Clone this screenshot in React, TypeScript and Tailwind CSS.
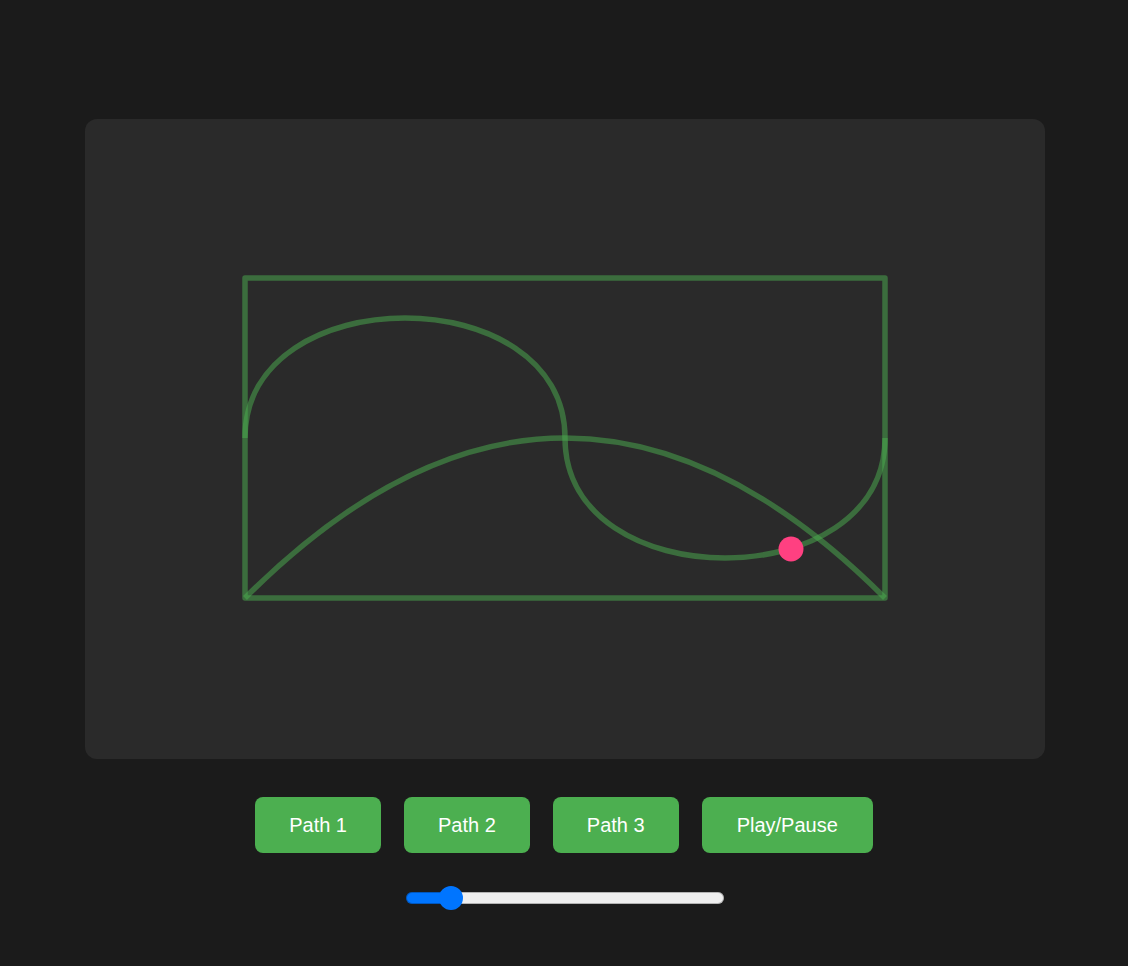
import React, { useEffect, useRef, useState } from "react";

// Path shapes in a 640x320 box, drawn at an offset inside the stage
const PATHS = [
  "M0,160 C0,0 320,0 320,160 S640,320 640,160",
  "M0,320 Q320,0 640,320",
  "M0,0 L640,0 L640,320 L0,320 Z",
];

function pointOnPath(el: SVGPathElement | null, t: number) {
  if (!el) return { x: 546, y: 271 };
  const len = el.getTotalLength();
  const p = el.getPointAtLength(len * t);
  return { x: p.x, y: p.y };
}

export default function App() {
  const [active, setActive] = useState(0);
  const [playing, setPlaying] = useState(false);
  const [speed, setSpeed] = useState(2);
  const [progress, setProgress] = useState(0.645);
  const pathRefs = useRef<(SVGPathElement | null)[]>([]);

  useEffect(() => {
    if (!playing) return;
    let frame = 0;
    let last = performance.now();
    const tick = (now: number) => {
      const dt = (now - last) / 1000;
      last = now;
      setProgress((p) => (p + dt * speed * 0.05) % 1);
      frame = requestAnimationFrame(tick);
    };
    frame = requestAnimationFrame(tick);
    return () => cancelAnimationFrame(frame);
  }, [playing, speed]);

  const dot = pointOnPath(pathRefs.current[active] ?? null, progress);
  const fill = ((speed - 1) / 9) * 100;

  return (
    <div
      className="min-h-screen bg-[#1b1b1b] flex flex-col items-center pt-[119px]"
      style={{ fontFamily: "'Liberation Sans', Arial, sans-serif" }}
    >
      <div className="ml-[2px] w-[960px] h-[640px] rounded-xl bg-[#2a2a2a] overflow-hidden">
        <svg width="960" height="640" viewBox="0 0 960 640">
          <g transform="translate(160,159)">
            {PATHS.map((d, i) => (
              <path
                key={i}
                ref={(el) => {
                  pathRefs.current[i] = el;
                }}
                d={d}
                fill="none"
                stroke="#4caf50"
                strokeOpacity={0.5}
                strokeWidth={5.5}
                strokeLinejoin="round"
              />
            ))}
            <circle cx={dot.x} cy={dot.y} r={12.5} fill="#ff4081" />
          </g>
        </svg>
      </div>

      <div className="flex gap-[23px] mt-[38px]">
        {["Path 1", "Path 2", "Path 3"].map((label, i) => (
          <button
            key={label}
            onClick={() => {
              setActive(i);
              setProgress(0);
            }}
            className="h-14 px-[34px] rounded-lg bg-[#4caf50] text-white text-[20px] cursor-pointer"
          >
            {label}
          </button>
        ))}
        <button
          onClick={() => setPlaying((p) => !p)}
          className="h-14 px-[35px] rounded-lg bg-[#4caf50] text-white text-[20px] cursor-pointer"
        >
          Play/Pause
        </button>
      </div>

      <div className="ml-[2px] mt-[33px] h-6 flex items-center">
        <input
          type="range"
          min={1}
          max={10}
          step={0.1}
          value={speed}
          onChange={(e) => setSpeed(Number(e.target.value))}
          className="appearance-none w-[318px] h-3 rounded-full outline-none cursor-pointer shadow-[inset_0_0_0_1px_rgba(0,0,0,0.25)] [&::-webkit-slider-thumb]:appearance-none [&::-webkit-slider-thumb]:w-6 [&::-webkit-slider-thumb]:h-6 [&::-webkit-slider-thumb]:rounded-full [&::-webkit-slider-thumb]:bg-[#0075ff]"
          style={{
            background: `linear-gradient(to right, #0075ff 0%, #0075ff ${fill}%, #efefef ${fill}%, #efefef 100%)`,
          }}
        />
      </div>
    </div>
  );
}
